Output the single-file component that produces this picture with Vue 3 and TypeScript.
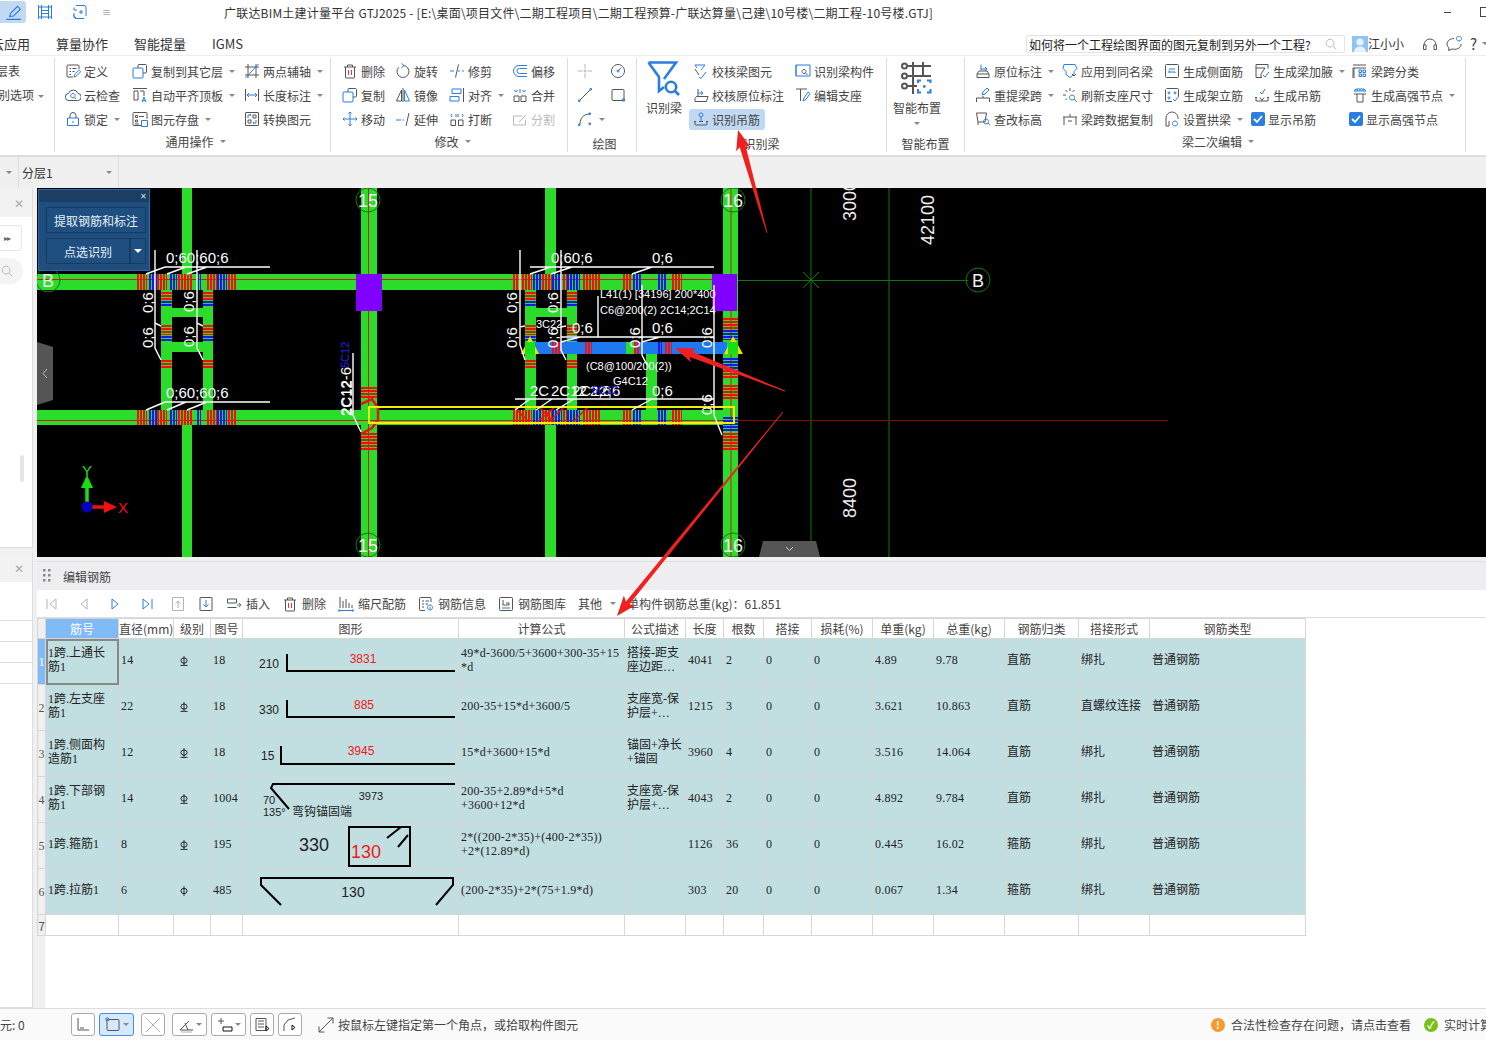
<script setup lang="ts">
import { h } from 'vue'

type IconDef = { g?: string; b?: string; r?: string; k?: string; l?: string }

const colors: Record<string, string> = { g: '#555', b: '#2b7de0', r: '#e33', k: '#111', l: '#b4b4b4' }

const icons: Record<string, IconDef> = {
  frame: { b: 'M1.5 1v14M4.5 1v14M11.5 1v14M14.5 1v14M1 3h14M1 13h14M4.5 6.5h7M4.5 9.5h7' },
  frameAdd: { b: 'M4 1.5h8a2 2 0 0 1 2 2V12M12 14.5H4a2 2 0 0 1-2-2V9M2 6V3.5M7 8h4M9 6v4M5 6H2M1 11l3 3' },
  pen: { b: 'M5 12l1-3 6-6 2.5 2.5-6 6zM2 14.5h13' },
  define: { g: 'M14 6V3a1 1 0 0 0-1-1H3a1 1 0 0 0-1 1v10a1 1 0 0 0 1 1h5M4.5 5.5H6M7.5 5.5h4M4.5 8.5H6M7.5 8.5h2M4.5 11.5H6', b: 'M9 14l.7-2.5L14.2 7l1.6 1.6-4.5 4.5z' },
  cloud: { g: 'M4 13.5a3.5 3.5 0 0 1-.5-7A5 5 0 0 1 13 6.5a3.5 3.5 0 0 1-.5 7z', b: 'M8 6.5a2.2 2.2 0 1 0 .01 0M9.6 10.6l1.4 1.4' },
  lock: { g: 'M5 7V4.5a3 3 0 0 1 6 0V7', b: 'M2.5 7h11v7.5h-11zM8 10v2' },
  copyTo: { g: 'M6 5V2.5a1 1 0 0 1 1-1h6.5a1 1 0 0 1 1 1V9a1 1 0 0 1-1 1H11', b: 'M2 5h8a1 1 0 0 1 1 1v8a1 1 0 0 1-1 1H2a1 1 0 0 1-1-1V6a1 1 0 0 1 1-1z' },
  alignTop: { g: 'M1 1.5h14M2 4h4v9H2zM8 4h4v5', b: 'M10 15l2-5 2 5M10.7 13.5h2.6' },
  save: { g: 'M9 14.5H2a1 1 0 0 1-1-1v-11a1 1 0 0 1 1-1h12a1 1 0 0 1 1 1V8M3.5 4.5h2v2h-2zM7 5.5h5M3.5 9h2v2h-2zM3 13h4', b: 'M9.5 9.5h6v6h-6z' },
  twoPoint: { g: 'M1 4h14M1 12h14M4 1v14M12 1v14', b: 'M1.5 15L14.5 1' },
  length: { g: 'M1.5 2v12M14.5 2v12', b: 'M3 8h10M5 6L3 8l2 2M11 6l2 2-2 2' },
  convert: { g: 'M2 1.5h12a.5.5 0 0 1 .5.5v12a.5.5 0 0 1-.5.5H2a.5.5 0 0 1-.5-.5V2a.5.5 0 0 1 .5-.5zM4 9h3v3H4zM9 4h3v3H9z', b: 'M4 7V4h3M6 3l1 1-1 1M12 9v3H9M10 11l-1 1 1 1' },
  trash: { g: 'M2 4h12M5.5 4V2h5v2M3.5 4v10.5a.5.5 0 0 0 .5.5h8a.5.5 0 0 0 .5-.5V4', r: 'M6.5 7v5M9.5 7v5' },
  rotate: { g: 'M8 2.5a6 6 0 1 1-4.3 1.8', b: 'M6.5 .5L9 2.5 6.5 4.5' },
  trim: { g: 'M9.5 1.5L6.5 14.5', b: 'M1 8h4M9 8h2M13 8h2' },
  mirror: { g: 'M8 1v14M6.5 14h-5l5-11z', b: 'M9.5 3l5 11h-5z' },
  align: { g: 'M14.5 1v14', b: 'M3 2h9v4.5H3zM1 9.5h9V14H1z' },
  move: { b: 'M8 1v14M1 8h14M6.5 2.5L8 1l1.5 1.5M6.5 13.5L8 15l1.5-1.5M2.5 6.5L1 8l1.5 1.5M13.5 6.5L15 8l-1.5 1.5' },
  extend: { g: 'M14 2l-3 13', b: 'M1 9h5M7.5 9H9' },
  breakup: { g: 'M2 9h4.5v5.5H2zM9.5 9H14v5.5H9.5z', b: 'M3 6L2 4.5 3 3M13 6l1-1.5L13 3M7 3v3M9 3v3' },
  offset: { b: 'M15 2.5H7a5.5 5.5 0 0 0 0 11h8M15 5.5H7.5a2.5 2.5 0 0 0 0 5H15' },
  merge: { g: 'M2 9h5v5.5H2zM9 9h5v5.5H9z', b: 'M2.5 3L4 5l1.5-2M10.5 3L12 5l1.5-2M8 2v4' },
  split: { g: 'M1.5 5h9M1.5 5v9h12V9M7 11l7-7' },
  point: { l: 'M8 1v4.5M8 10.5V15M1 8h4.5M10.5 8H15M7 8a1 1 0 1 0 2 0 1 1 0 1 0-2 0' },
  dial: { g: 'M8 1.5a6.5 6.5 0 1 0 .01 0', b: 'M8 8l3.5-3.5M7 8a1 1 0 1 0 2 0 1 1 0 1 0-2 0' },
  line: { g: 'M3 13L13 3', b: 'M1.5 14.5H3V13H1.5zM13 3h1.5V1.5H13z' },
  rect: { g: 'M3 2.5h10a1 1 0 0 1 1 1v9a1 1 0 0 1-1 1H3a1 1 0 0 1-1-1v-9a1 1 0 0 1 1-1z', b: 'M12.5 12h2v2h-2z' },
  arc: { g: 'M3 13C3 7 7 3 12 3', b: 'M1.5 14.5H3V13H1.5zM12 3.5h1.5V2H12zM12 13.5h1.5V12H12z' },
  checkBeam: { g: 'M2 6l4 6', b: 'M2 2h10M12 2L8 7M6 14l2 1.5L13 9M2 2l2 3' },
  checkMark: { g: 'M2 14.5h11.5l1.5-5H3.5L2 11.5zM5 9.5V2', b: 'M5 6h5M8 4l2 2-2 2' },
  hanger: { g: 'M1 10.5h2M13 10.5h2M2 10.5v2.5a1 1 0 0 0 1 1h10a1 1 0 0 0 1-1v-2.5M6 10.5h4', b: 'M8 2a2 2 0 1 0 .01 0M8 6v4.5' },
  beamComp: { b: 'M1 2h14v11H6L1 13zM1 2v11', g: 'M9 6.5a2 2 0 1 0 .01 0M10.5 10l2 2' },
  support: { g: 'M1 2h11M5.5 2v12', b: 'M8 14l1-3 4-6 2 1.5-4 6z' },
  origin: { g: 'M2 14.5V11l2-3h8l2 3v3.5zM2 11h12', b: 'M6 1.5V7M6 6h6M10 4l2 2-2 2' },
  sameName: { b: 'M2 1.5h11l2 4-3 3v3l-4 3-4-3v-3l-3-3z', g: 'M10 11l2 2 2-2' },
  reSpan: { g: 'M1.5 15v-4h13v4M8 11V9', b: 'M7 8l1-3 4-4 2 2-4 4z' },
  markup: { g: 'M1.5 2h10l-1.5 9h-7zM3 11v3', b: 'M11 8a2.5 2.5 0 1 0 .01 0M13 12l2 2' },
  refresh: { g: 'M8 1v3M3.5 3l2 2M1 8h3M3.5 13l1.5-1.5M12.5 3l-2 2', b: 'M10 8a2.5 2.5 0 1 0 .01 0M12 12l3 3' },
  spanCopy: { g: 'M1 6h14M2 6v8M14 6v8M8 3v3M6 10h4' },
  sideBar: { g: 'M2.5 1.5h11a1 1 0 0 1 1 1v11a1 1 0 0 1-1 1h-11a1 1 0 0 1-1-1v-11a1 1 0 0 1 1-1z', b: 'M5 6h6M5 10V7.5M5 9h6M11 10V9' },
  topBar: { g: 'M2.5 1.5h11a1 1 0 0 1 1 1v7M8 14.5H2.5a1 1 0 0 1-1-1v-11', b: 'M5 5a1 1 0 1 0 .01 0M11 5a1 1 0 1 0 .01 0M5 10a1 1 0 1 0 .01 0M9 12l2 2 4-5' },
  arch: { g: 'M2 15V7a6 6 0 0 1 12 0v1M2 15h3v-5', b: 'M11 10a2.5 2.5 0 1 0 .01 0' },
  haunch: { g: 'M2 1.5h12v4M2 1.5v13h6M2 5h9L7 11v3.5', b: 'M9 12l2 2 4-5' },
  genHanger: { g: 'M1 10.5h2M13 10.5h2M2 10.5V14h12v-3.5M6 10.5l2 3 2-3', b: 'M6 5l2 2 3-5' },
  spanSort: { g: 'M1 2h13M1 5h13M2 5v10M1 5v10', b: 'M7 7h2.5v2.5H7zM11 7h2.5v2.5H11zM7 11h2.5v2.5H7zM11 11h2.5v2.5H11z' },
  strong: { g: 'M2 7h12M5 7v8M11 7v8M5 15h6', b: 'M2 4l2-2h8l2 2zM5 2v2M8 2v2M11 2v2' },
  first: { l: 'M3 3v10M12 3L6 8l6 5z' },
  prev: { l: 'M11 3L5 8l6 5z' },
  next: { b: 'M5 3l6 5-6 5z' },
  last: { b: 'M4 3l6 5-6 5zM13 3v10' },
  up: { l: 'M2.5 1.5h11v13h-11zM8 12V5M5.5 7.5L8 5l2.5 2.5' },
  down: { g: 'M2.5 1.5h11a.5.5 0 0 1 .5.5v12a.5.5 0 0 1-.5.5h-11a.5.5 0 0 1-.5-.5V2a.5.5 0 0 1 .5-.5z', b: 'M8 4v7M5.5 8.5L8 11l2.5-2.5' },
  insert: { g: 'M1.5 3h9v4h-9zM1.5 11.5h9', b: 'M11 9h4M13 7l2 2-2 2' },
  scale: { g: 'M2 1v11M5 5v7M8 3v9M11 7v5M14 9v3', b: 'M1 14.5h14M1 13v3M15 13v3' },
  barInfo: { g: 'M13 6V2.5a1 1 0 0 0-1-1H2.5a1 1 0 0 0-1 1v11a1 1 0 0 0 1 1H7M4 5h2M7.5 5H11M4 8h2M7.5 8H10M4 11h2', b: 'M12 9a2.5 2.5 0 1 0 .01 0M12 11v2' },
  library: { g: 'M2.5 1.5h11a1 1 0 0 1 1 1v11a1 1 0 0 1-1 1h-11a1 1 0 0 1-1-1v-11a1 1 0 0 1 1-1zM5 4v5h6v-2H8', b: 'M4 12h8' },
  grade: { k: 'M8 2.5v10M4.5 7.5a3.5 3 0 0 1 7 0 3.5 3 0 0 1-7 0zM4 13h8' },
  grade2: { k: 'M8 2.5v11M4.5 8a3.5 3 0 0 1 7 0 3.5 3 0 0 1-7 0z' },
  ortho: { g: 'M3 1v12h11M5 11h4' },
  snap: { g: 'M3 2.5h10a1 1 0 0 1 1 1v9a1 1 0 0 1-1 1H3a1 1 0 0 1-1-1v-9a1 1 0 0 1 1-1z', b: 'M1 1h2.5v2.5H1z' },
  cross: { l: 'M1 1l14 14M15 1L1 15' },
  angle: { g: 'M2 13h13M2 13L11 4M7 6l3 7', l: 'M3 15h11' },
  plusDim: { g: 'M1 4h6M4 1v6', k: 'M6 10h9v4H6z' },
  layerBtn: { g: 'M2 1.5h10v12H2zM4 4h6M4 7h6M4 10h6', k: 'M12 9l3 2.5L12 14z' },
  polyArrow: { g: 'M2 14V8l4-5 7-2', k: 'M10 8l3 2.5-3 2.5z' },
  resize: { g: 'M1 15L15 1M1 15V9.5M1 15h5.5M15 1H9.5M15 1v5.5' },
  headset: { g: 'M2 9a6 6 0 0 1 12 0M1.5 9h2.5v4.5H1.5zM12 9h2.5v4.5H12z' },
  chat: { g: 'M8 2.5C4 2.5 1 5 1 8c0 1.500 .8 3 2 4l-.5 2.500L6 13c4 1 9-.5 9-5', b: 'M13 0a2.500 2.500 0 1 0 .01 0' },
  search: { l: 'M7 2.500a4.500 4.500 0 1 0 .01 0M10.500 10.500L14 14' }
}

// small line icon, one path per colour
const Icon = (props: { name: string; size?: number }) => {
  const def = icons[props.name] ?? {}
  const s = props.size ?? 16
  return h(
    'svg',
    { width: s, height: s, viewBox: '0 0 16 16', fill: 'none', style: 'flex:none;display:block' },
    Object.entries(def).map(([c, d]) => h('path', { d, stroke: colors[c], 'stroke-width': 1 }))
  )
}

type Item = { t: string; i?: string; caret?: boolean; off?: boolean; on?: boolean; check?: boolean }

const common: Item[] = [
  { t: '定义', i: 'define' }, { t: '复制到其它层', i: 'copyTo', caret: true }, { t: '两点辅轴', i: 'twoPoint', caret: true },
  { t: '云检查', i: 'cloud' }, { t: '自动平齐顶板', i: 'alignTop', caret: true }, { t: '长度标注', i: 'length', caret: true },
  { t: '锁定', i: 'lock', caret: true }, { t: '图元存盘', i: 'save', caret: true }, { t: '转换图元', i: 'convert' }
]
const modify: Item[] = [
  { t: '删除', i: 'trash' }, { t: '旋转', i: 'rotate' }, { t: '修剪', i: 'trim' }, { t: '偏移', i: 'offset' },
  { t: '复制', i: 'copyTo' }, { t: '镜像', i: 'mirror' }, { t: '对齐', i: 'align', caret: true }, { t: '合并', i: 'merge' },
  { t: '移动', i: 'move' }, { t: '延伸', i: 'extend' }, { t: '打断', i: 'breakup' }, { t: '分割', i: 'split', off: true }
]
const draw: Item[] = [
  { t: '', i: 'point' }, { t: '', i: 'dial' },
  { t: '', i: 'line' }, { t: '', i: 'rect' },
  { t: '', i: 'arc', caret: true }
]
const recog: Item[] = [
  { t: '校核梁图元', i: 'checkBeam' }, { t: '识别梁构件', i: 'beamComp' },
  { t: '校核原位标注', i: 'checkMark' }, { t: '编辑支座', i: 'support' },
  { t: '识别吊筋', i: 'hanger', on: true }
]
const second: Item[] = [
  { t: '原位标注', i: 'origin', caret: true }, { t: '应用到同名梁', i: 'sameName' }, { t: '生成侧面筋', i: 'sideBar' }, { t: '生成梁加腋', i: 'haunch', caret: true }, { t: '梁跨分类', i: 'spanSort' },
  { t: '重提梁跨', i: 'reSpan', caret: true }, { t: '刷新支座尺寸', i: 'refresh' }, { t: '生成架立筋', i: 'topBar' }, { t: '生成吊筋', i: 'genHanger' }, { t: '生成高强节点', i: 'strong', caret: true },
  { t: '查改标高', i: 'markup' }, { t: '梁跨数据复制', i: 'spanCopy' }, { t: '设置拱梁', i: 'arch', caret: true }, { t: '显示吊筋', check: true }, { t: '显示高强节点', check: true }
]

const columns = [8, 73, 55, 37, 32, 216, 166, 61, 38, 40, 48, 61, 61, 71, 74, 71, 156]
const headers = ['直径(mm)', '级别', '图号', '图形', '计算公式', '公式描述', '长度', '根数', '搭接', '损耗(%)', '单重(kg)', '总重(kg)', '钢筋归类', '搭接形式', '钢筋类型']

const rows = [
  { name: '1跨.上通长\n筋1', dia: '14', grade: 'grade', fig: '18', formula: '49*d-3600/5+3600+300-35+15\n*d', desc: '搭接-距支\n座边距…', len: '4041', count: '2', unit: '4.89', total: '9.78', kind: '直筋', lap: '绑扎' },
  { name: '1跨.左支座\n筋1', dia: '22', grade: 'grade', fig: '18', formula: '200-35+15*d+3600/5', desc: '支座宽-保\n护层+…', len: '1215', count: '3', unit: '3.621', total: '10.863', kind: '直筋', lap: '直螺纹连接' },
  { name: '1跨.侧面构\n造筋1', dia: '12', grade: 'grade', fig: '18', formula: '15*d+3600+15*d', desc: '锚固+净长\n+锚固', len: '3960', count: '4', unit: '3.516', total: '14.064', kind: '直筋', lap: '绑扎' },
  { name: '1跨.下部钢\n筋1', dia: '14', grade: 'grade', fig: '1004', formula: '200-35+2.89*d+5*d\n+3600+12*d', desc: '支座宽-保\n护层+…', len: '4043', count: '2', unit: '4.892', total: '9.784', kind: '直筋', lap: '绑扎' },
  { name: '1跨.箍筋1', dia: '8', grade: 'grade', fig: '195', formula: '2*((200-2*35)+(400-2*35))\n+2*(12.89*d)', desc: '', len: '1126', count: '36', unit: '0.445', total: '16.02', kind: '箍筋', lap: '绑扎' },
  { name: '1跨.拉筋1', dia: '6', grade: 'grade2', fig: '485', formula: '(200-2*35)+2*(75+1.9*d)', desc: '', len: '303', count: '20', unit: '0.067', total: '1.34', kind: '箍筋', lap: '绑扎' }
]

// rebar ticks on the canvas: one dashed line per band
const R = '#f01010'
const B = '#1818e8'
const topBands: [number, number, string][] = [
  [137, 147, R], [149, 157, B], [157, 167, R], [170, 177, B], [178, 193, R], [197, 201, B], [207, 217, R], [217, 227, B], [228, 237, R],
  [513, 532, R], [533, 542, B], [542, 552, R], [552, 562, B], [563, 567, R], [567, 580, B], [583, 600, R], [623, 632, R], [633, 642, B], [658, 667, B], [672, 682, R]
]
const colBands: [number, number, string][] = [[292, 300, R], [301, 307, B], [325, 335, R], [336, 342, B], [360, 368, R]]
const mainCol: [number, number, string][] = [[387, 399, R], [433, 450, R]]
const rightCol: [number, number, string][] = [[318, 330, R], [330, 340, B], [358, 370, B], [370, 378, R], [385, 400, R], [417, 431, B], [433, 450, R]]
const blueBeam: [number, number, string][] = [[552, 560, R], [585, 592, R], [634, 640, R], [658, 662, B], [665, 672, R]]

const grid = [
  { x: 368, y: 200, t: '15' }, { x: 368, y: 545, t: '15' }, { x: 733, y: 200, t: '16' }, { x: 733, y: 545, t: '16' },
  { x: 48, y: 280, t: 'B' }, { x: 978, y: 280, t: 'B' }
]

const bigTexts = [
  { x: 166, y: 263, t: '0;60;60;6' }, { x: 166, y: 398, t: '0;60;60;6' },
  { x: 551, y: 263, t: '0;60;6' }, { x: 652, y: 263, t: '0;6' },
  { x: 572, y: 333, t: '0;6' }, { x: 652, y: 333, t: '0;6' }, { x: 652, y: 396, t: '0;6' },
  { x: 530, y: 396, t: '2C' }, { x: 551, y: 396, t: '2C12' }, { x: 572, y: 396, t: '2C12;6' }, { x: 590, y: 396, t: '2;6' }
]
const smallTexts = [
  { x: 600, y: 298, t: 'L41(1) [34196] 200*400' }, { x: 600, y: 314, t: 'C6@200(2) 2C14;2C14' },
  { x: 586, y: 370, t: '(C8@100/200(2))' }, { x: 613, y: 385, t: 'G4C12' }, { x: 536, y: 328, t: '3C22' }
]
const vertTexts = [
  [153, 313], [153, 348], [194, 312], [194, 347], [517, 313], [517, 348], [558, 313], [558, 348], [640, 348], [712, 348], [712, 415]
]
const leaders =
  'M165 267H270M146 274L165 267M167 274L186 267M187 274L207 267M155 250V323L161 326M155 323V348L161 360M197 250V323L203 326M197 323V348L203 360' +
  'M165 402H270M146 410L165 402M167 410L186 402M187 410L207 402' +
  'M530 267H634M530 274L551 267M551 274L572 267M632 267H714M632 274L652 267' +
  'M520 250V327L525 326M520 327V345L525 360M561 250V327L566 326M561 327V350L566 360' +
  'M561 337H714M561 342L580 337M642 342L660 337M598 296V337M642 285V355L647 365M714 285V415L722 435' +
  'M515 399H633M515 410L530 399M536 410L552 399M556 410L574 399M632 399H714M632 410L652 399' +
  'M353 353V415L361 432'

// tapered red arrow drawn over the screenshot
function arrow(x1: number, y1: number, x2: number, y2: number, neck = 3) {
  const len = Math.hypot(x2 - x1, y2 - y1)
  const ux = (x2 - x1) / len
  const uy = (y2 - y1) / len
  const nx = -uy
  const ny = ux
  const bx = x2 - ux * 17
  const by = y2 - uy * 17
  const pts = [
    [x1 + nx * 0.4, y1 + ny * 0.4],
    [bx + nx * neck, by + ny * neck],
    [bx - ux * 3 + nx * 7.5, by - uy * 3 + ny * 7.5],
    [x2, y2],
    [bx - ux * 3 - nx * 7.5, by - uy * 3 - ny * 7.5],
    [bx - nx * neck, by - ny * neck],
    [x1 - nx * 0.4, y1 - ny * 0.4]
  ]
  return pts.map((p) => p[0].toFixed(1) + ',' + p[1].toFixed(1)).join(' ')
}
const arrows = [arrow(767, 233, 738, 130), arrow(785, 391, 675, 348), arrow(783, 412, 617, 616, 2.2)]
</script>

<template>
  <div class="app">
    <header class="titlebar">
      <div class="quick on"><Icon name="pen" size="18" /></div>
      <div class="quick q2"><Icon name="frame" /></div>
      <div class="quick q3"><Icon name="frameAdd" /></div>
      <span class="qcaret">≡</span>
      <div class="title">广联达BIM土建计量平台 GTJ2025 - [E:\桌面\项目文件\二期工程项目\二期工程预算-广联达算量\己建\10号楼\二期工程-10号楼.GTJ]</div>
      <div class="winbtns">
        <span class="min"></span>
        <span class="restore"></span>
      </div>
    </header>

    <nav class="menubar">
      <span class="menu first">云应用</span>
      <span class="menu">算量协作</span>
      <span class="menu">智能提量</span>
      <span class="menu">IGMS</span>
      <div class="searchbox">
        <span>如何将一个工程绘图界面的图元复制到另外一个工程?</span>
        <Icon name="search" size="14" />
      </div>
      <svg class="avatar" width="16" height="16" viewBox="0 0 16 16">
        <rect width="16" height="16" fill="#8fc2f5" />
        <circle cx="8" cy="6" r="3.6" fill="#e8f2fc" />
        <path d="M2 16c.5-4 3-5.500 6-5.500s5.500 1.500 6 5.500z" fill="#e8f2fc" />
      </svg>
      <span class="user">江小小</span>
      <div class="helpicons">
        <Icon name="headset" />
        <Icon name="chat" />
        <span class="qmark">?</span>
        <span class="caret"></span>
      </div>
    </nav>

    <section class="ribbon">
      <div class="group g1">
        <div class="clip-list">
          <div class="clip c1">楼层表</div>
          <div class="clip c2">识别选项<span class="caret"></span></div>
        </div>
      </div>

      <div class="group g2">
        <div class="items">
          <div v-for="it in common" :key="it.t" class="item">
            <Icon :name="it.i!" /><span>{{ it.t }}</span><span v-if="it.caret" class="caret"></span>
          </div>
        </div>
        <div class="label">通用操作<span class="caret"></span></div>
      </div>

      <div class="group g3">
        <div class="items">
          <div v-for="it in modify" :key="it.t" class="item" :class="{ off: it.off }">
            <Icon :name="it.i!" /><span>{{ it.t }}</span><span v-if="it.caret" class="caret"></span>
          </div>
        </div>
        <div class="label">修改<span class="caret"></span></div>
      </div>

      <div class="group g4">
        <div class="items">
          <div v-for="it in draw" :key="it.i" class="item">
            <Icon :name="it.i!" /><span v-if="it.caret" class="caret"></span>
          </div>
        </div>
        <div class="label low">绘图</div>
      </div>

      <div class="group g5">
        <div class="body">
          <div class="big">
            <svg width="34" height="36" viewBox="0 0 34 36" fill="none" stroke="#2b7de0" stroke-width="2.6">
              <path d="M1.500 2.500H29L17 19M1.500 2.500L12 17V31L17 27" />
              <circle cx="24" cy="27" r="5.200" />
              <path d="M28 31l4 4" />
            </svg>
            <span>识别梁</span>
          </div>
          <div class="items">
            <div v-for="it in recog" :key="it.t" class="item" :class="{ active: it.on }">
              <Icon :name="it.i!" /><span>{{ it.t }}</span>
            </div>
          </div>
        </div>
        <div class="label low">识别梁</div>
      </div>

      <div class="group g6">
        <div class="big">
          <svg width="32" height="34" viewBox="0 0 32 34" fill="none" stroke="#555" stroke-width="2">
            <path d="M7 4H30M7 14H30M7 24H16M12 0V32M22 0V14" />
            <circle cx="3.500" cy="4" r="2.500" />
            <circle cx="3.500" cy="14" r="2.500" />
            <circle cx="3.500" cy="24" r="2.500" />
            <path d="M17 21v-2.500h3M26 18.500h3.500V21M29.500 27v3.500H26M20 30.500h-3V27" stroke="#2b7de0" />
            <circle cx="23.300" cy="24.500" r="1.400" fill="#2b7de0" stroke="none" />
          </svg>
          <span>智能布置</span>
          <span class="caret bigcaret"></span>
        </div>
        <div class="label low">智能布置</div>
      </div>

      <div class="group g7">
        <div class="items">
          <div v-for="it in second" :key="it.t" class="item" :class="{ checked: it.check }">
            <svg v-if="it.check" class="checkbox" width="14" height="14" viewBox="0 0 14 14">
              <rect width="14" height="14" rx="2" fill="#2b7de0" />
              <path d="M3 7l3 3 5-6" fill="none" stroke="#fff" stroke-width="1.800" />
            </svg>
            <Icon v-else :name="it.i!" />
            <span>{{ it.t }}</span><span v-if="it.caret" class="caret"></span>
          </div>
        </div>
        <div class="label">梁二次编辑<span class="caret"></span></div>
      </div>
    </section>

    <div class="subbar">
      <div class="subcell s1"><span class="caret"></span></div>
      <div class="subcell s2"><span>分层1</span><span class="caret"></span></div>
    </div>

    <main class="main">
      <aside class="side">
        <div class="sidepanel top">
          <div class="sidehead"><span class="x">✕</span></div>
          <div class="expand">▸▸</div>
          <div class="sidesearch"><Icon name="search" size="14" /></div>
          <div class="thumb"></div>
        </div>
        <div class="sidepanel bottom">
          <div class="sidehead"><span class="x">✕</span></div>
          <div class="siderow spacer"></div>
          <div class="siderow"></div>
          <div class="siderow"></div>
          <div class="siderow"></div>
        </div>
      </aside>

      <div class="work">
        <div class="cad">
          <svg class="drawing" width="1449" height="369" viewBox="37 188 1449 369">
            <rect x="37" y="188" width="1449" height="369" fill="#000" />
            <path d="M811 188V557M889 188V557M737 280.500H968M803 272L819 288M803 288L819 272" stroke="#0a7a0a" fill="none" />

            <g fill="#2bdc2b">
              <rect x="37" y="274" width="700" height="16" />
              <rect x="37" y="410" width="700" height="15" />
              <rect x="182" y="188" width="10" height="86" />
              <rect x="182" y="425" width="10" height="132" />
              <rect x="545" y="188" width="11" height="86" />
              <rect x="545" y="425" width="11" height="132" />
              <rect x="361" y="188" width="16" height="369" />
              <rect x="723" y="188" width="15" height="369" />
              <rect x="161" y="290" width="11" height="120" />
              <rect x="203" y="290" width="10" height="120" />
              <rect x="161" y="308" width="52" height="9" />
              <rect x="161" y="342" width="52" height="10" />
              <rect x="525" y="290" width="11" height="120" />
              <rect x="567" y="290" width="10" height="120" />
              <rect x="525" y="308" width="52" height="9" />
              <rect x="646" y="354" width="11" height="56" />
            </g>

            <path d="M37 279.500H712M37 420.500H737M368.500 188V557M731 188V557" stroke="#d01818" fill="none" />
            <path d="M737 420.500H1168" stroke="#8a0808" fill="none" />

            <line v-for="b in topBands" :key="'t' + b[0]" :x1="b[0]" y1="282" :x2="b[1]" y2="282" :stroke="b[2]" stroke-width="16" stroke-dasharray="2 1" />
            <line v-for="b in topBands" :key="'u' + b[0]" :x1="b[0]" y1="417.500" :x2="b[1]" y2="417.500" :stroke="b[2]" stroke-width="15" stroke-dasharray="2 1" />
            <template v-for="cx in [166.5, 208, 530.5, 572]" :key="cx">
              <line v-for="b in colBands" :key="b[0]" :x1="cx" :y1="b[0]" :x2="cx" :y2="b[1]" :stroke="b[2]" stroke-width="10.500" stroke-dasharray="2 1" />
            </template>
            <line v-for="b in mainCol" :key="'m' + b[0]" x1="369" :y1="b[0]" x2="369" :y2="b[1]" :stroke="b[2]" stroke-width="16" stroke-dasharray="2 1" />
            <line v-for="b in rightCol" :key="'r' + b[0]" x1="730.500" :y1="b[0]" x2="730.500" :y2="b[1]" :stroke="b[2]" stroke-width="15" stroke-dasharray="2 1" />

            <path d="M361 404L372 399L378 408V420L372 428L361 434" fill="none" stroke="#f01010" stroke-width="2.500" />
            <path d="M513 406L530 423H548L565 406M538 406L555 423H572L589 406M556 406L536 423" fill="none" stroke="#f01010" stroke-width="1.500" />

            <rect x="356" y="274" width="26" height="37" fill="#8000ff" />
            <rect x="712" y="274" width="25" height="37" fill="#8000ff" />

            <rect x="533" y="342" width="194" height="12" fill="#1e78f0" />
            <rect x="626" y="342" width="8" height="12" fill="#2bdc2b" />
            <line v-for="b in blueBeam" :key="'b' + b[0]" :x1="b[0]" y1="348" :x2="b[1]" y2="348" :stroke="b[2]" stroke-width="12" stroke-dasharray="2 1" />
            <path d="M521 354L530 336L539 354zM724 354L733 336L743 354z" fill="#f0e000" />
            <path d="M525 354V342H535V354zM728 354V342H738V354z" fill="#16e016" />

            <rect x="369" y="407" width="365" height="16" fill="none" stroke="#f0f000" stroke-width="2" />

            <path :d="leaders" fill="none" stroke="#fff" stroke-width="1.400" />

            <g v-for="c in grid" :key="c.t + c.x + c.y">
              <circle :cx="c.x" :cy="c.y" r="12" fill="none" stroke="#0a7a0a" />
              <text :x="c.x" :y="c.y + 6.500" class="gridtext">{{ c.t }}</text>
            </g>

            <text v-for="t in bigTexts" :key="t.t + t.x + t.y" :x="t.x" :y="t.y" class="bigtext">{{ t.t }}</text>
            <text v-for="t in smallTexts" :key="t.t" :x="t.x" :y="t.y" class="smalltext">{{ t.t }}</text>
            <text v-for="v in vertTexts" :key="v[0] + '-' + v[1]" class="bigtext" :transform="`rotate(-90 ${v[0]} ${v[1]})`" :x="v[0]" :y="v[1]">0;6</text>
            <text class="bigtext" transform="rotate(-90 351 416)" x="351" y="416">2C12-6</text>
            <text class="bigtext" transform="rotate(-90 352 416)" x="352" y="416">2C12</text>
            <text class="bluetext" transform="rotate(-90 349 368)" x="349" y="368">5C12</text>
            <text class="bluetext" x="592" y="394">5C12</text>

            <text class="dim" transform="rotate(-90 856 221)" x="856" y="221">3000</text>
            <text class="dim" transform="rotate(-90 934 245)" x="934" y="245">42100</text>
            <text class="dim" transform="rotate(-90 856 518)" x="856" y="518">8400</text>

            <path d="M87 503V486" stroke="#16e016" stroke-width="3.500" />
            <path d="M81 488L87 475L93 488z" fill="#16e016" />
            <path d="M87 507H106" stroke="#f01010" stroke-width="3.500" />
            <path d="M104 501L117 507L104 513z" fill="#f01010" />
            <circle cx="87" cy="507" r="5.500" fill="#0000c0" />
            <text class="axis y" x="82" y="476">Y</text>
            <text class="axis x" x="118" y="513">X</text>

            <path d="M37 342L53 347V400L37 405z" fill="#555" />
            <path d="M47 369L43 373.500L47 378" fill="none" stroke="#bbb" />
            <path d="M759 557L763 541H816L820 557z" fill="#555" />
            <path d="M786 547L789.500 550.500L793 547" fill="none" stroke="#ccc" />
          </svg>

          <div class="floatpanel">
            <div class="floathead"><span>✕</span></div>
            <button class="fbtn wide">提取钢筋和标注</button>
            <div class="fsplit">
              <button class="fbtn">点选识别</button>
              <button class="fbtn drop"><span class="wcaret"></span></button>
            </div>
          </div>
        </div>

        <section class="editor">
          <div class="edhead">
            <svg class="grip" width="8" height="14" viewBox="0 0 8 14" fill="#888">
              <rect x="0" y="0" width="2.500" height="2.500" /><rect x="5" y="0" width="2.500" height="2.500" />
              <rect x="0" y="5" width="2.500" height="2.500" /><rect x="5" y="5" width="2.500" height="2.500" />
              <rect x="0" y="10" width="2.500" height="2.500" /><rect x="5" y="10" width="2.500" height="2.500" />
            </svg>
            <span>编辑钢筋</span>
          </div>

          <div class="tools">
            <div class="nav">
              <Icon name="first" /><Icon name="prev" /><Icon name="next" /><Icon name="last" />
            </div>
            <div class="updown">
              <Icon name="up" /><Icon name="down" />
            </div>
            <div class="tool"><Icon name="insert" />插入</div>
            <div class="tool"><Icon name="trash" />删除</div>
            <div class="tool"><Icon name="scale" />缩尺配筋</div>
            <div class="tool"><Icon name="barInfo" />钢筋信息</div>
            <div class="tool"><Icon name="library" />钢筋图库</div>
            <div class="tool other">其他<span class="caret"></span></div>
            <div class="totalw">单构件钢筋总重(kg)：61.851</div>
          </div>

          <div class="gridwrap">
            <table class="bars">
              <colgroup>
                <col v-for="(w, i) in columns" :key="i" :style="{ width: w + 'px' }" />
              </colgroup>
              <thead>
                <tr>
                  <th class="rowno"></th>
                  <th class="hot">筋号</th>
                  <th v-for="t in headers" :key="t">{{ t }}</th>
                </tr>
              </thead>
              <tbody>
                <tr v-for="(r, i) in rows" :key="r.name" class="datarow">
                  <td class="rowno" :class="{ cur: i === 0 }">{{ i + 1 }}</td>
                  <td class="name" :class="{ sel: i === 0 }">{{ r.name }}</td>
                  <td class="num">{{ r.dia }}</td>
                  <td class="gradecell"><Icon :name="r.grade" size="14" /></td>
                  <td class="num">{{ r.fig }}</td>
                  <td class="shapecell">
                    <svg class="shape" width="216" height="45" viewBox="0 0 216 45">
                      <template v-if="i === 0">
                        <path d="M44 15V32H212" />
                        <text x="16" y="29" class="sn">210</text>
                        <text x="120" y="24" class="sn red mid">3831</text>
                      </template>
                      <template v-else-if="i === 1">
                        <path d="M44 15V32H212" />
                        <text x="16" y="29" class="sn">330</text>
                        <text x="121" y="24" class="sn red mid">885</text>
                      </template>
                      <template v-else-if="i === 2">
                        <path d="M38 15V33H212" />
                        <text x="18" y="29" class="sn">15</text>
                        <text x="118" y="24" class="sn red mid">3945</text>
                      </template>
                      <template v-else-if="i === 3">
                        <path d="M212 7H30L28 11L46 32" />
                        <text x="128" y="23" class="sn mid s11">3973</text>
                        <text x="20" y="27" class="sn s11">70</text>
                        <text x="20" y="39" class="sn s11">135°</text>
                        <text x="49" y="39" class="sc">弯钩锚固端</text>
                      </template>
                      <template v-else-if="i === 4">
                        <path d="M106 4H167V43H106zM144 15L158 4M155 24L165 12" />
                        <text x="56" y="28" class="sn s18">330</text>
                        <text x="108" y="35" class="sn s18 red">130</text>
                      </template>
                      <template v-else>
                        <path d="M38 36L18 16V9H210V16L193 36" />
                        <text x="110" y="28" class="sn mid s14">130</text>
                      </template>
                    </svg>
                  </td>
                  <td class="num formula">{{ r.formula }}</td>
                  <td class="desc">{{ r.desc }}</td>
                  <td class="num">{{ r.len }}</td>
                  <td class="num">{{ r.count }}</td>
                  <td class="num">0</td>
                  <td class="num">0</td>
                  <td class="num">{{ r.unit }}</td>
                  <td class="num">{{ r.total }}</td>
                  <td class="text">{{ r.kind }}</td>
                  <td class="text">{{ r.lap }}</td>
                  <td class="text">普通钢筋</td>
                </tr>
                <tr class="emptyrow">
                  <td class="rowno">7</td>
                  <td v-for="n in 16" :key="n"></td>
                </tr>
              </tbody>
            </table>
          </div>
        </section>
      </div>
    </main>

    <footer class="status">
      <span class="count">图元: 0</span>
      <button class="sbtn"><Icon name="ortho" /></button>
      <button class="sbtn w active"><Icon name="snap" /><span class="caret"></span></button>
      <button class="sbtn sep"><Icon name="cross" /></button>
      <button class="sbtn w sep"><Icon name="angle" /><span class="caret"></span></button>
      <button class="sbtn w"><Icon name="plusDim" /><span class="caret"></span></button>
      <button class="sbtn"><Icon name="layerBtn" /></button>
      <button class="sbtn"><Icon name="polyArrow" /></button>
      <Icon class="resize" name="resize" />
      <span class="hint">按鼠标左键指定第一个角点，或拾取构件图元</span>
      <div class="right">
        <span class="dot warn">!</span>
        <span>合法性检查存在问题，请点击查看</span>
        <span class="dot ok">✓</span>
        <span>实时计算</span>
      </div>
    </footer>

    <svg class="arrows" width="1486" height="1040" viewBox="0 0 1486 1040">
      <polygon v-for="(p, i) in arrows" :key="i" :points="p" fill="#f02020" />
    </svg>
  </div>
</template>

<style scoped>
.app {
  position: relative;
  display: flex;
  flex-direction: column;
  width: 1486px;
  height: 1040px;
  overflow: hidden;
  background: #fff;
  color: #444;
  font-family: "Noto Sans CJK SC", "Liberation Sans", sans-serif;
  font-size: 12px;
}

.caret {
  display: inline-block;
  flex: none;
  width: 0;
  height: 0;
  margin-left: 4px;
  border-left: 3px solid transparent;
  border-right: 3px solid transparent;
  border-top: 3px solid #888;
  vertical-align: middle;
}

/* title bar */
.titlebar {
  display: flex;
  align-items: center;
  flex: none;
  height: 28px;
}

.quick {
  display: flex;
  align-items: center;
  justify-content: center;
  flex: none;
}

.quick.on {
  width: 26px;
  height: 22px;
  margin-top: -4px;
  background: #c2d9f2;
  border-radius: 0 3px 3px 0;
}

.quick.q2 {
  margin-left: 11px;
  margin-top: -4px;
}

.quick.q3 {
  margin-left: 19px;
  margin-top: -4px;
}

.qcaret {
  margin-left: 14px;
  margin-top: -3px;
  color: #777;
  font-size: 9px;
}

.title {
  margin-left: 113px;
  margin-top: -3px;
  color: #333;
  letter-spacing: 0.2px;
  white-space: nowrap;
}

.winbtns {
  display: flex;
  align-items: center;
  margin-left: auto;
  margin-top: -4px;
}

.min {
  width: 7px;
  height: 1px;
  margin-right: 29px;
  background: #444;
}

.restore {
  width: 8px;
  height: 8px;
  margin-right: -4px;
  border: 1px solid #444;
}

/* menu row */
.menubar {
  display: flex;
  align-items: center;
  flex: none;
  height: 28px;
  padding-top: 4px;
  box-sizing: border-box;
  border-bottom: 1px solid #eee;
}

.menu {
  margin-right: 26px;
  color: #333;
  font-size: 13px;
}

.menu.first {
  margin-left: -9px;
}

.searchbox {
  display: flex;
  align-items: center;
  justify-content: space-between;
  box-sizing: border-box;
  width: 319px;
  height: 18px;
  margin-left: 780px;
  margin-top: 1px;
  padding: 0 6px 0 2px;
  border: 1px solid #e4e4e4;
  border-radius: 2px;
  color: #222;
  font-size: 12px;
  position: absolute;
  left: 246px;
}

.avatar {
  position: absolute;
  left: 1352px;
}

.user {
  position: absolute;
  left: 1368px;
  font-size: 12px;
  color: #333;
}

.helpicons {
  position: absolute;
  left: 1422px;
  display: flex;
  align-items: center;
  gap: 8px;
}

.qmark {
  font-size: 15px;
  line-height: 16px;
}

.helpicons .caret {
  margin-left: -3px;
}

/* ribbon */
.ribbon {
  display: flex;
  flex: none;
  box-sizing: border-box;
  height: 101px;
  padding-top: 2px;
  border-bottom: 2px solid #ddd;
}

.group {
  display: flex;
  flex: none;
  flex-direction: column;
  box-sizing: border-box;
  height: 94px;
  border-right: 1px solid #ddd;
}

.g1 { width: 55px; }
.g2 { width: 276px; padding-left: 6px; }
.g3 { width: 237px; padding-left: 7px; }
.g4 { width: 69px; padding-left: 5px; }
.g5 { width: 250px; }
.g6 { width: 78px; }
.g7 { width: 501px; padding-left: 6px; }

.clip-list {
  padding-top: 1px;
}

.clip {
  height: 24px;
  line-height: 24px;
  white-space: nowrap;
}

.c1 { margin-left: -16px; }
.c2 { margin-left: -14px; }

.items {
  display: grid;
  grid-auto-rows: 24px;
  padding-top: 1px;
  align-items: center;
}

.g2 .items { grid-template-columns: 67px 112px auto; }
.g3 .items { grid-template-columns: 53px 54px 63px auto; }
.g4 .items { grid-template-columns: 33px auto; }
.g5 .items { grid-template-columns: 102px auto; }
.g7 .items { grid-template-columns: 87px 102px 90px 98px auto; }

.item {
  display: flex;
  align-items: center;
  gap: 3px;
  height: 21px;
  padding: 0 4px;
  white-space: nowrap;
}

.item .caret {
  margin-left: 3px;
}

.item.off {
  color: #bbb;
}

.item.off svg {
  opacity: 0.4;
}

.item.active {
  justify-self: start;
  width: 76px;
  box-sizing: border-box;
  background: #c0d9f2;
  border-radius: 3px;
}

.item.checked {
  margin-left: -3px;
}

.label {
  flex: 1;
  display: flex;
  align-items: center;
  justify-content: center;
  color: #444;
}

.label.low {
  padding-top: 4px;
}

.label .caret {
  margin-left: 6px;
}

.g5 .body {
  display: flex;
}

.big {
  display: flex;
  flex-direction: column;
  align-items: center;
  flex: none;
}

.g5 .big {
  width: 50px;
  margin-left: 2px;
  padding-top: 2px;
}

.g5 .big span {
  margin-top: 3px;
  line-height: 18px;
}

.g6 .big span {
  margin-top: 3px;
  line-height: 18px;
}

.g6 .big {
  box-sizing: border-box;
  height: 73px;
  margin-right: 17px;
  padding-top: 4px;
}

.g6 .big .bigcaret {
  margin: 5px 0 0;
}

/* strip under ribbon */
.subbar {
  display: flex;
  flex: none;
  height: 31px;
  background: #f0f0f0;
}

.subcell {
  display: flex;
  align-items: center;
  justify-content: space-between;
  border-right: 1px solid #ddd;
  box-sizing: border-box;
  padding-right: 6px;
}

.s1 {
  width: 19px;
  justify-content: flex-end;
}

.s2 {
  width: 100px;
  padding-left: 3px;
  color: #333;
  font-size: 12px;
}

/* main */
.main {
  display: flex;
  flex: 1;
  min-height: 0;
  background: #f0f0f0;
}

.side {
  display: flex;
  flex: none;
  flex-direction: column;
  gap: 5px;
  width: 33px;
}

.sidepanel {
  position: relative;
  box-sizing: border-box;
  background: #fff;
  border-right: 1px solid #ddd;
  border-bottom: 1px solid #ddd;
}

.sidepanel.top {
  height: 360px;
}

.sidepanel.bottom {
  flex: 1;
}

.sidehead {
  display: flex;
  align-items: center;
  justify-content: flex-end;
  height: 29px;
  padding-right: 8px;
  background: #f2f2f2;
}

.x {
  color: #aaa;
  font-size: 12px;
}

.expand {
  box-sizing: border-box;
  width: 22px;
  height: 26px;
  margin-top: 8px;
  padding-left: 4px;
  border: 1px solid #e6e6e6;
  border-left: 0;
  border-radius: 0 4px 4px 0;
  line-height: 24px;
  font-size: 8px;
  letter-spacing: -1px;
  color: #666;
}

.sidesearch {
  display: flex;
  align-items: center;
  width: 23px;
  height: 26px;
  margin-top: 7px;
  background: #f4f4f4;
  border-radius: 0 13px 13px 0;
}

.thumb {
  position: absolute;
  left: 20px;
  top: 267px;
  width: 4px;
  height: 27px;
  border-radius: 2px;
  background: #e4e4e4;
}

.siderow {
  height: 20px;
  border-bottom: 1px solid #ddd;
}

.siderow.spacer {
  height: 38px;
}

.work {
  display: flex;
  flex: 1;
  flex-direction: column;
  min-width: 0;
  margin-left: 4px;
}

.cad {
  position: relative;
  flex: none;
  height: 369px;
  background: #000;
}

.drawing {
  display: block;
}

.gridtext {
  fill: #eee;
  font-family: "Liberation Sans", sans-serif;
  font-size: 18px;
  text-anchor: middle;
}

.bigtext {
  fill: #fff;
  font-family: "Liberation Sans", sans-serif;
  font-size: 15px;
}

.smalltext {
  fill: #fff;
  font-family: "Liberation Sans", sans-serif;
  font-size: 11px;
}

.bluetext {
  fill: #2020e0;
  font-family: "Liberation Sans", sans-serif;
  font-size: 11px;
}

.dim {
  fill: #eee;
  font-family: "Liberation Sans", sans-serif;
  font-size: 18px;
}

.axis {
  font-family: "Liberation Sans", sans-serif;
  font-size: 15px;
}

.axis.x { fill: #f01010; }
.axis.y { fill: #16e016; }

.floatpanel {
  position: absolute;
  left: 1px;
  top: 1px;
  box-sizing: border-box;
  width: 112px;
  height: 82px;
  background: #1f4e7e;
  border: 1px solid #2b6aa8;
}

.floathead {
  height: 12px;
  padding-right: 2px;
  background: #1c3e62;
  color: #cfe0f0;
  font-size: 8px;
  line-height: 12px;
  text-align: right;
}

.fbtn {
  box-sizing: border-box;
  height: 26px;
  padding: 0;
  background: #1e4f80;
  border: 1px solid #173b60;
  color: #e8eff6;
  font-family: inherit;
  font-size: 12px;
}

.fbtn.wide {
  display: block;
  width: 100px;
  margin: 5px 0 0 7px;
}

.fsplit {
  display: flex;
  margin: 5px 0 0 7px;
}

.fsplit .fbtn {
  width: 84px;
}

.fsplit .fbtn.drop {
  display: flex;
  align-items: center;
  justify-content: center;
  width: 16px;
}

.wcaret {
  width: 0;
  height: 0;
  border-left: 4px solid transparent;
  border-right: 4px solid transparent;
  border-top: 4px solid #fff;
}

/* rebar editor */
.editor {
  display: flex;
  flex: 1;
  flex-direction: column;
  min-height: 0;
  margin-top: 4px;
  background: #fff;
  border-top: 1px solid #ddd;
}

.edhead {
  display: flex;
  align-items: center;
  flex: none;
  height: 28px;
  padding-left: 6px;
  background: #eeeef0;
  color: #444;
}

.edhead span {
  margin-left: 12px;
}

.tools {
  display: flex;
  align-items: center;
  flex: none;
  gap: 12px;
  height: 28px;
  padding-left: 7px;
  box-sizing: border-box;
  border-bottom: 1px solid #ddd;
}

.nav {
  display: flex;
  gap: 15.6px;
  width: 111px;
}

.updown {
  display: flex;
  gap: 12px;
  margin-left: 3px;
}

.tool {
  display: flex;
  align-items: center;
  gap: 4px;
  white-space: nowrap;
}

.tool.other {
  margin-right: -1px;
}

.totalw {
  margin-left: 0;
  white-space: nowrap;
}

.gridwrap {
  flex: 1;
  min-height: 0;
  background: linear-gradient(to right, #f0f0f0 8px, #fff 8px);
}

.bars {
  width: 1268px;
  table-layout: fixed;
  border-collapse: collapse;
  color: #222;
}

.bars th,
.bars td {
  padding: 0;
  border: 1px solid #d6d6d6;
  overflow: hidden;
}

.bars th {
  height: 19px;
  background: #fff;
  color: #444;
  font-weight: 400;
  white-space: nowrap;
}

.bars th.hot {
  background: #80bbf7;
  color: #fff;
}

.bars th.rowno,
.bars td.rowno {
  background: #f0f0f0;
  color: #555;
  text-align: center;
}

.bars td.rowno.cur {
  background: #80bbf7;
  color: #fff;
}

.datarow td {
  box-sizing: border-box;
  height: 46px;
  background: #c1dee1;
  font-family: "Liberation Serif", "Noto Sans CJK SC", serif;
  line-height: 14px;
}

.emptyrow td {
  height: 20px;
}

.bars td.name,
.bars td.desc,
.bars td.text,
.bars td.num {
  padding: 0 0 4px 2px;
  white-space: pre-line;
}

.bars td.name.sel {
  outline: 2px solid #888;
  outline-offset: -2px;
}

.bars td.num {
  letter-spacing: 0.25px;
}

.bars td.gradecell {
  padding: 0 0 2px 3px;
}

.shapecell {
  line-height: 0;
}

.shape {
  display: block;
}

.shape path {
  fill: none;
  stroke: #000;
  stroke-width: 2;
}

.sn {
  fill: #222;
  font-family: "Liberation Sans", sans-serif;
  font-size: 12px;
}

.sn.red {
  fill: #f01818;
}

.sn.mid {
  text-anchor: middle;
}

.sn.s11 { font-size: 11px; }
.sn.s14 { font-size: 14px; }
.sn.s18 { font-size: 18px; }

.sc {
  fill: #222;
  font-family: "Noto Sans CJK SC", sans-serif;
  font-size: 12px;
}

/* status bar */
.status {
  display: flex;
  align-items: center;
  flex: none;
  gap: 4px;
  height: 32px;
  box-sizing: border-box;
  background: #fafafa;
  border-top: 1px solid #ddd;
  white-space: nowrap;
}

.count {
  width: 79px;
  margin-left: -12px;
  font-size: 12px;
}

.sbtn {
  display: flex;
  align-items: center;
  justify-content: center;
  box-sizing: border-box;
  width: 24px;
  height: 23px;
  padding: 0;
  background: #fff;
  border: 1px solid #aaa;
  border-radius: 3px;
}

.sbtn.w {
  width: 35px;
}

.sbtn .caret {
  margin-left: 2px;
}

.sbtn.sep {
  margin-left: 3px;
}

.sbtn.active {
  background: #d6e8fb;
  border-color: #3c8ef0;
}

.resize {
  margin-left: 12px;
}

.hint {
  color: #444;
}

.right {
  display: flex;
  align-items: center;
  margin-left: auto;
  margin-right: -6px;
}

.dot {
  display: flex;
  align-items: center;
  justify-content: center;
  width: 14px;
  height: 14px;
  margin-right: 6px;
  border-radius: 50%;
  color: #fff;
  font-size: 10px;
  font-weight: 700;
}

.dot.warn {
  background: #f59a2e;
}

.dot.ok {
  margin-left: 13px;
  background: #78bf1a;
}

.arrows {
  position: absolute;
  left: 0;
  top: 0;
  pointer-events: none;
}
</style>
